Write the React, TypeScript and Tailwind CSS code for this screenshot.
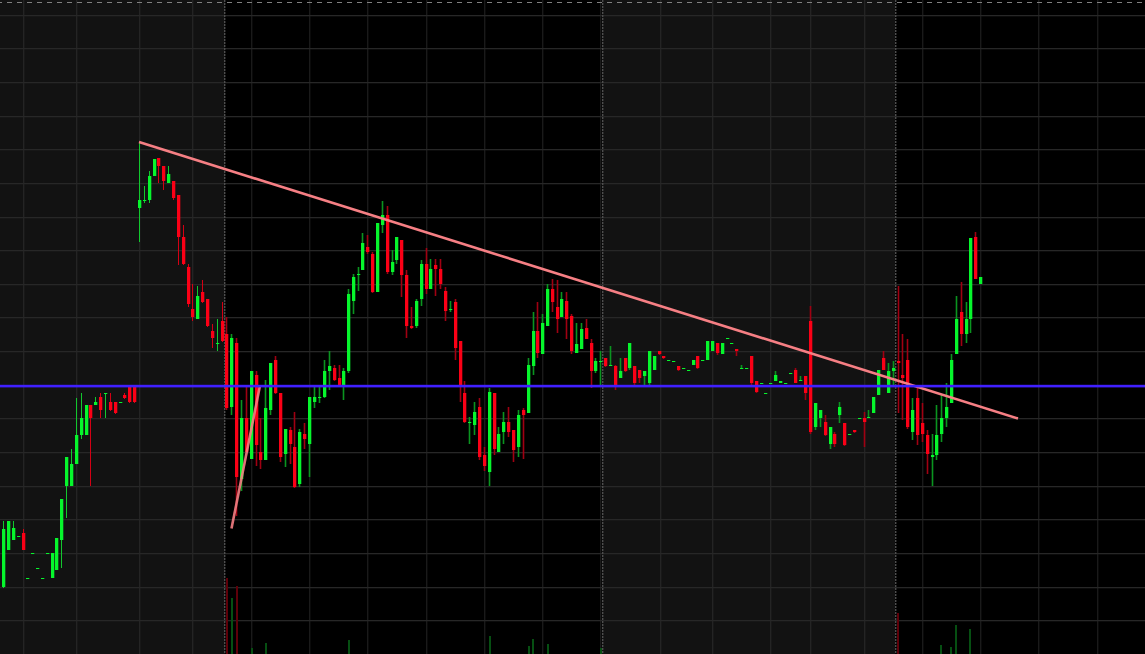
type C = [number, number, number, number, number, number];

const candles: C[] = [
  [3,521,529,587,588,1],[8,521,521,550,550,1],[13,521,528,540,540,1],[18,536,536,537,537,1],[23,529,533,550,550,0],
  [27,578,578,579,579,1],[32,553,553,554,554,1],[37,568,568,569,569,1],[42,578,578,579,579,1],[47,553,553,554,554,1],
  [52,553,553,578,578,1],[56,538,538,570,570,1],[61,499,499,540,568,1],[66,457,457,486,518,1],[71,449,464,486,486,1],
  [76,398,435,464,464,1],[81,393,418,435,439,1],[86,405,405,435,435,1],[90,405,405,418,486,0],[95,397,402,405,405,1],
  [100,393,397,410,418,0],[105,393,393,394,418,1],[110,393,402,410,411,0],[115,402,402,413,414,0],[120,402,402,403,403,1],
  [124,393,395,398,399,0],[129,387,387,402,403,0],[134,387,387,402,403,0],
  [139,142,200,208,242,1],[144,186,200,201,203,1],[149,171,176,200,203,1],[154,159,159,176,176,1],[158,158,158,166,183,0],
  [163,166,166,181,190,0],[168,166,174,183,183,1],[173,181,181,198,200,0],[178,195,195,237,265,0],[183,225,237,264,265,0],
  [188,264,267,304,307,0],[192,284,309,317,321,0],[197,286,296,319,319,1],[202,280,292,302,303,0],[207,299,299,326,327,0],
  [212,324,331,338,348,0],[217,319,343,344,351,1],[222,302,321,341,342,0],[226,317,334,408,410,0],[231,334,338,407,415,1],
  [236,338,343,477,516,0],[241,400,418,479,491,1],[246,387,418,452,452,0],[251,371,371,459,459,1],[256,371,375,445,466,0],
  [260,418,452,460,469,0],[265,380,408,460,460,1],[270,363,363,410,415,1],[275,356,360,393,394,0],[280,393,393,457,462,0],
  [285,429,429,454,467,1],[290,427,430,444,464,0],[294,412,447,487,488,0],[299,429,432,484,487,1],[304,423,434,439,449,0],
  [309,397,397,444,477,1],[314,387,397,402,408,1],[319,387,397,398,403,1],[324,360,371,397,398,1],[329,351,366,371,390,1],
  [334,365,368,380,381,0],[339,365,378,387,387,0],[343,368,371,385,400,1],[348,289,294,371,373,1],[353,274,277,301,314,1],
  [358,267,274,275,291,1],[362,233,243,270,270,1],[367,235,247,252,254,0],[372,252,254,292,293,0],[377,223,223,292,292,1],
  [382,201,215,225,233,1],[387,206,215,272,274,0],[392,250,262,272,275,1],[396,237,237,260,264,1],[401,240,240,275,297,0],
  [406,270,275,326,338,0],[411,307,326,328,329,0],[416,299,301,326,328,1],[421,260,264,299,306,1],[426,248,264,289,294,0],
  [430,259,269,289,289,1],[435,259,265,269,296,0],[440,259,269,284,289,0],[445,287,291,311,321,0],[450,301,309,310,312,1],
  [455,299,302,348,360,0],[460,341,341,386,402,0],[464,381,393,422,423,0],[469,417,422,423,444,1],[474,402,412,425,435,1],
  [479,398,407,457,460,0],[484,447,455,466,471,0],[489,388,392,472,486,1],[494,393,393,449,455,0],[498,427,434,452,452,1],
  [503,412,422,432,444,1],[508,407,422,432,437,0],[513,430,430,450,462,0],[518,410,415,447,457,1],[523,408,410,415,459,0],
  [528,358,365,413,413,1],[533,312,331,366,375,1],[537,302,331,353,358,0],[542,314,323,354,354,1],[547,284,289,326,326,1],
  [552,279,289,302,312,0],[557,280,307,319,333,0],[561,292,299,317,317,1],[566,292,301,319,339,0],[571,314,316,351,354,0],
  [576,323,344,353,353,1],[581,323,329,349,349,1],[586,319,328,339,339,0],[591,339,343,371,388,0],[595,358,361,371,373,1],
  [600,351,361,362,385,1],[605,358,358,366,367,0],[610,346,365,366,366,1],[615,365,366,385,390,0],[620,358,371,378,378,1],
  [625,358,358,371,372,0],[629,343,343,368,370,1],[634,366,366,383,385,0],[639,370,370,378,383,0],[644,371,371,376,385,1],
  [649,351,351,383,385,1],[654,356,356,370,370,1],[659,351,351,354,355,0],[663,356,356,358,359,0],[668,360,360,361,361,1],
  [673,361,361,362,362,1],[678,366,366,370,371,0],[683,368,368,369,369,1],[688,370,370,371,371,1],[693,360,360,365,365,1],
  [697,356,356,368,369,0],[702,360,360,361,361,1],[707,341,341,360,360,1],[712,341,341,351,351,1],[717,343,343,353,355,0],
  [722,343,343,354,354,1],[727,338,338,339,339,1],[731,343,343,344,344,1],[736,349,349,351,356,0],[741,365,368,369,369,1],
  [746,368,368,369,369,1],[751,356,356,383,385,0],[756,381,381,392,393,0],[761,383,383,384,384,1],[765,393,393,394,394,1],
  [770,383,383,384,384,1],[775,371,375,381,381,1],[780,381,381,383,383,1],[785,383,383,384,384,1],[790,373,373,374,374,1],
  [795,368,370,383,383,0],[800,376,380,381,381,1],[805,376,376,393,400,0],[810,306,321,432,434,0],[815,403,403,427,430,1],
  [820,410,410,418,427,1],[825,415,422,435,436,0],[830,427,427,444,449,1],[834,432,434,444,447,0],[839,402,407,415,423,1],
  [844,423,423,445,446,0],[849,434,434,435,435,1],[854,430,430,432,433,0],[859,418,418,419,419,1],[864,412,418,422,447,0],
  [868,410,417,418,418,1],[873,397,397,413,413,1],[878,370,370,395,395,1],[883,351,358,370,370,0],[888,363,371,393,393,1],
  [893,361,368,371,385,1],[898,286,361,363,413,0],[902,334,375,378,420,0],[907,339,360,427,429,0],[912,398,410,432,440,1],
  [917,385,398,435,445,0],[922,403,423,434,442,0],[927,430,435,454,474,0],[932,434,455,457,486,1],[936,405,435,455,460,1],
  [941,394,418,434,442,1],[946,383,407,418,427,1],[951,354,360,403,403,1],[956,296,319,354,354,1],[961,282,312,334,346,0],
  [966,302,319,334,343,1],[970,238,238,319,333,1],[975,232,237,279,279,0],[980,277,277,284,284,1],
];

const volumes: [number, number, number][] = [
  [226,578,0],[231,598,1],[236,586,0],[251,648,1],[265,643,1],[348,640,1],[489,636,1],[528,646,1],[532,639,1],
  [547,644,1],[600,648,1],[897,613,0],[940,645,1],[950,647,1],[955,625,1],[969,629,1],
];

const hLines = [15,48,82,116,149,183,217,250,284,317,351,385,418,452,486,519,553,587,620];
const vLines = [23,76,139,192,251,309,367,426,484,542,600,660,712,770,810,864,922,980,1038,1097];
const sessions = [224,602,895];

function wickColor(x: number, up: number) {
  if (x < 225) return up ? "#12c82e" : "#d40014";
  return up ? "#0a9420" : "#a00012";
}

export default function App() {
  return (
    <div className="relative h-[654px] w-[1145px] overflow-hidden bg-black">
      <div className="flex h-full w-full">
        <div className="w-[225px] bg-[#121212]" />
        <div className="w-[377px] bg-black" />
        <div className="w-[293px] bg-[#121212]" />
        <div className="flex-1 bg-black" />
      </div>
      <svg className="absolute inset-0 block" width={1145} height={654} viewBox="0 0 1145 654">
        <g>
          {vLines.map((x) => {
            const gray = x < 224 || (x > 602 && x < 895);
            return <rect key={x} x={x} y={0} width={1.4} height={654} fill={gray ? "#242424" : "#1a1a1a"} />;
          })}
          {hLines.map((y) => (
            <rect key={y} x={0} y={y} width={1145} height={1.3} fill="#272727" />
          ))}
          {volumes.map(([x, top, up]) => (
            <rect key={x} x={x} y={top} width={2} height={654 - top} fill={up ? "#064f12" : "#5e0009"} />
          ))}
          {sessions.map((x) => (
            <line key={x} x1={x + 0.7} y1={0} x2={x + 0.7} y2={654} stroke="#4e4e4e" strokeWidth={1.4} strokeDasharray="2 1" />
          ))}
          <line x1={0} y1={2.5} x2={1145} y2={2.5} stroke="#808080" strokeWidth={1} strokeDasharray="5 5" strokeDashoffset={3} />
          {candles.map(([x, wt, bt, bb, wb, up]) => (
            <g key={x}>
              {wb > wt &&
                (x < 225 ? (
                  <rect x={x} y={wt} width={1} height={wb - wt} fill={wickColor(x, up)} />
                ) : (
                  <rect x={x - 0.3} y={wt} width={1.6} height={wb - wt} fill={wickColor(x, up)} />
                ))}
              <rect x={x - 1} y={bt} width={3.3} height={Math.max(bb - bt, 1)} fill={up ? "#06f62c" : "#fb0016"} />
            </g>
          ))}
        </g>
        <line x1={139} y1={142} x2={1018} y2={418.5} stroke="#f67f84" strokeWidth={2.6} />
        <line x1={231.5} y1={528.5} x2={260} y2={385.5} stroke="#f67f84" strokeWidth={2.6} opacity={0.9} />
        <rect x={0} y={384.8} width={1145} height={2.6} fill="#4020ff" />
      </svg>
    </div>
  );
}
